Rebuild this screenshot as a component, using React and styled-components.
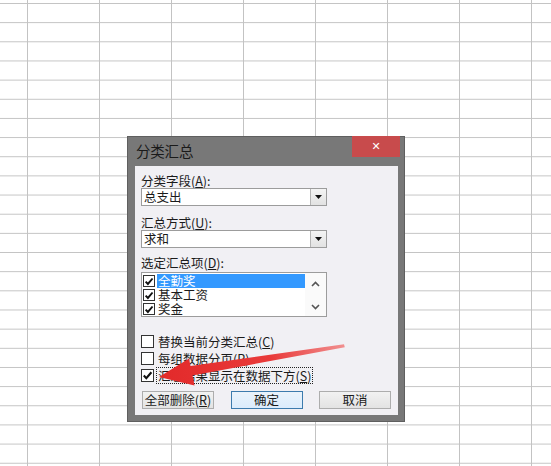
import React from 'react';
import styled, { createGlobalStyle } from 'styled-components';

const GlobalStyle = createGlobalStyle`
  html, body {
    margin: 0;
    padding: 0;
    background: #fff;
  }
  body {
    font-family: "Noto Sans CJK SC", "Liberation Sans", sans-serif;
    color: #1b1b1b;
  }
`;

const CheckMark = () => (
  <svg width="11" height="11" viewBox="0 0 11 11">
    <path d="M1.8 5.6 L4.3 8.2 L9.4 2.2" fill="none" stroke="#111" strokeWidth="2.1" />
  </svg>
);

const Check = ({ checked, small }) => (
  <Box $small={small}>{checked && <CheckMark />}</Box>
);

const Arrow = () => (
  <ArrowSvg width="551" height="466" viewBox="0 0 551 466">
    <defs>
      <linearGradient id="arrowFill" x1="160" y1="376" x2="345" y2="345" gradientUnits="userSpaceOnUse">
        <stop offset="0" stopColor="#e22a2a" />
        <stop offset="0.6" stopColor="#e93a3a" />
        <stop offset="1" stopColor="#f19090" />
      </linearGradient>
    </defs>
    <polygon
      points="159,377 189,358.5 190.5,366 344,344.3 344.8,347.2 192.5,375.5 194.5,385.5"
      fill="url(#arrowFill)"
    />
  </ArrowSvg>
);

const Dropdown = ({ value }) => (
  <Select>
    <SelectValue>{value}</SelectValue>
    <DropButton>
      <svg width="7" height="4" viewBox="0 0 7 4">
        <polygon points="0,0 7,0 3.5,4" fill="#111" />
      </svg>
    </DropButton>
  </Select>
);

const items = [
  { name: '全勤奖', selected: true },
  { name: '基本工资' },
  { name: '奖金' },
];

const options = [
  { text: '替换当前分类汇总', key: 'C', checked: false },
  { text: '每组数据分页', key: 'P', checked: false },
  { text: '汇总结果显示在数据下方', key: 'S', checked: true, focus: true },
];

const App = () => (
  <>
    <GlobalStyle />
    <Sheet>
      <Dialog>
        <TitleBar>
          <Title>分类汇总</Title>
          <CloseButton>✕</CloseButton>
        </TitleBar>
        <Content>
          <Label>
            分类字段(<u>A</u>):
          </Label>
          <Dropdown value="总支出" />
          <Label $gap={10}>
            汇总方式(<u>U</u>):
          </Label>
          <Dropdown value="求和" />
          <Label $gap={8}>
            选定汇总项(<u>D</u>):
          </Label>
          <ListBox>
            <ListRows>
              {items.map((item) => (
                <ListRow key={item.name}>
                  <Check checked small />
                  <ListText $selected={item.selected}>{item.name}</ListText>
                </ListRow>
              ))}
            </ListRows>
            <ScrollBar>
              <svg width="9" height="6" viewBox="0 0 9 6">
                <path d="M1 5 L4.5 1.5 L8 5" fill="none" stroke="#555" strokeWidth="1.6" />
              </svg>
              <svg width="9" height="6" viewBox="0 0 9 6">
                <path d="M1 1 L4.5 4.5 L8 1" fill="none" stroke="#555" strokeWidth="1.6" />
              </svg>
            </ScrollBar>
          </ListBox>
          <Options>
            {options.map((opt) => (
              <OptionRow key={opt.key}>
                <Check checked={opt.checked} />
                <OptionText $focus={opt.focus}>
                  {opt.text}(<u>{opt.key}</u>)
                </OptionText>
              </OptionRow>
            ))}
          </Options>
          <ButtonRow>
            <Button>
              全部删除(<u>R</u>)
            </Button>
            <Button $primary>确定</Button>
            <Button>取消</Button>
          </ButtonRow>
        </Content>
      </Dialog>
      <Arrow />
    </Sheet>
  </>
);

const Sheet = styled.div`
  position: relative;
  width: 551px;
  height: 466px;
  overflow: hidden;
  background-color: #fff;
  background-image: linear-gradient(to right, #c3c3c3 1px, transparent 1px),
    linear-gradient(to bottom, #c3c3c3 1px, transparent 1px);
  background-size: 72px 19.17px;
  background-position: 27px 3px;
`;

const Dialog = styled.div`
  position: absolute;
  left: 127px;
  top: 136px;
  width: 278px;
  height: 286px;
  box-sizing: border-box;
  background: #787878;
  border: 1px solid #5f5f5f;
  padding: 0 6px 6px 7px;
  display: flex;
  flex-direction: column;
`;

const TitleBar = styled.div`
  height: 29px;
  display: flex;
  align-items: center;
  justify-content: space-between;
  position: relative;
`;

const Title = styled.div`
  font-size: 14.5px;
  color: #1a1a1a;
  margin-left: 1px;
  margin-top: -3px;
  letter-spacing: -0.2px;
`;

const CloseButton = styled.div`
  position: absolute;
  top: -1px;
  right: -2px;
  width: 48px;
  height: 21px;
  background: #c84b4c;
  color: #fff;
  font-size: 11px;
  font-weight: bold;
  font-family: "DejaVu Sans", sans-serif;
  display: flex;
  align-items: center;
  justify-content: center;
`;

const Content = styled.div`
  flex: 1;
  background: #f1f0f4;
  padding: 8px 6px 0 6px;
  display: flex;
  flex-direction: column;
  font-size: 12.5px;
`;

const Label = styled.div`
  height: 14px;
  line-height: 14px;
  margin-top: ${(p) => p.$gap || 0}px;
  white-space: nowrap;
  u {
    text-underline-offset: 1px;
  }
`;

const Select = styled.div`
  width: 186px;
  height: 18px;
  box-sizing: border-box;
  border: 1px solid #9c9c9c;
  background: #fff;
  display: flex;
  align-items: stretch;
`;

const SelectValue = styled.div`
  flex: 1;
  line-height: 16px;
  padding-left: 2px;
`;

const DropButton = styled.div`
  width: 16px;
  box-sizing: border-box;
  border-left: 1px solid #b5b5b5;
  background: linear-gradient(#f4f4f4, #e2e2e2);
  display: flex;
  align-items: center;
  justify-content: center;
`;

const ListBox = styled.div`
  margin-top: 2px;
  width: 186px;
  height: 45px;
  box-sizing: border-box;
  border: 1px solid #9c9c9c;
  background: #fff;
  display: flex;
`;

const ListRows = styled.div`
  flex: 1;
  padding-top: 1px;
`;

const ListRow = styled.div`
  height: 14px;
  display: flex;
  align-items: center;
  padding-left: 1px;
`;

const ListText = styled.div`
  flex: 1;
  height: 14px;
  line-height: 14px;
  margin-left: 2px;
  padding-left: 1px;
  background: ${(p) => (p.$selected ? '#3399ff' : 'transparent')};
  color: ${(p) => (p.$selected ? '#fff' : '#1b1b1b')};
`;

const ScrollBar = styled.div`
  width: 21px;
  display: flex;
  flex-direction: column;
  align-items: center;
  justify-content: space-between;
  padding: 8px 0 6px;
  background: #fafafa;
`;

const Box = styled.div`
  width: ${(p) => (p.$small ? 12 : 13)}px;
  height: ${(p) => (p.$small ? 12 : 13)}px;
  box-sizing: border-box;
  border: 1px solid #333;
  background: #fff;
  display: flex;
  align-items: center;
  justify-content: center;
  flex-shrink: 0;
`;

const Options = styled.div`
  margin-top: 16px;
  display: flex;
  flex-direction: column;
`;

const OptionRow = styled.div`
  height: 17px;
  display: flex;
  align-items: center;
`;

const OptionText = styled.div`
  margin-left: 2px;
  padding: 0 1px;
  line-height: 15px;
  border: 1px dotted ${(p) => (p.$focus ? '#222' : 'transparent')};
  white-space: nowrap;
`;

const ButtonRow = styled.div`
  margin-top: 7px;
  padding: 0 1px;
  display: flex;
  justify-content: space-between;
`;

const Button = styled.div`
  width: 72px;
  height: 18px;
  box-sizing: border-box;
  border: 1px solid ${(p) => (p.$primary ? '#3d7bad' : '#adadad')};
  background: ${(p) =>
    p.$primary ? 'linear-gradient(#eaf3fb, #dcecfc)' : 'linear-gradient(#f2f2f2, #e3e3e3)'};
  display: flex;
  align-items: center;
  justify-content: center;
  line-height: 16px;
  white-space: nowrap;
`;

const ArrowSvg = styled.svg`
  position: absolute;
  left: 0;
  top: 0;
  pointer-events: none;
`;

export default App;
